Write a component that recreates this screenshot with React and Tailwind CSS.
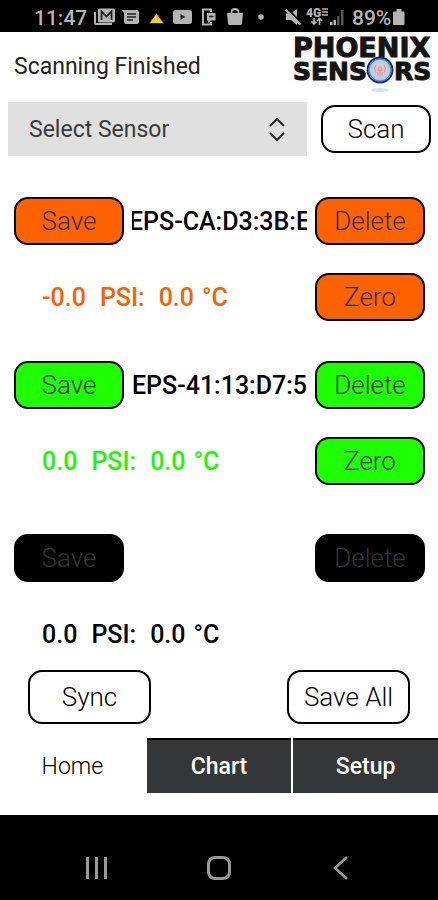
import React, { useState } from 'react';

const sensors = [
    {
        id: 'a', name: 'EPS-CA:D3:3B:E', reading: '-0.0', temp: '0.0', zero: true,
        text: 'text-[#f86000]', button: 'bg-[#ff6200] text-[#2e2e2e]', gap: 'mb-10',
    },
    {
        id: 'b', name: 'EPS-41:13:D7:5', reading: '0.0', temp: '0.0', zero: true,
        text: 'text-[#1cf800]', button: 'bg-[#1eff00] text-[#2e2e2e]', gap: 'mb-[49px]',
    },
    {
        id: 'c', name: '', reading: '0.0', temp: '0.0', zero: false,
        text: 'text-black', button: 'bg-black text-[#333333]', gap: '',
    },
];

const tabs = ['Home', 'Chart', 'Setup'];

const StatusBar = () => (
    <div className="flex h-8 shrink-0 items-center bg-black pt-1 pl-[34px] font-medium text-[#b4b4b4]">
        <span className="w-[60px] text-[21px] leading-6">11:47</span>
        <svg className="h-6 w-[250px]" viewBox="94 6 250 24" fill="#b4b4b4">
            {/* mail */}
            <path d="M94 12v11q0 2 2 2h16v-2H96V12z" />
            <rect x="98" y="8.5" width="17" height="14" rx="1.5" />
            <path d="M101.5 20v-8.500l5 5 5-5V20" fill="none" stroke="#222" strokeWidth="1.8" />
            {/* messages */}
            <path d="M122 10h15q2 0 2 2v10q0 2-2 2h-11q-2 0-2-2v-9z" />
            <path d="M127 14h9M127 17h9M127 20h6" stroke="#222" strokeWidth="1.4" />
            {/* warning */}
            <path d="M149 23.500l7.500-10.500 7.500 10.500z" fill="#f3cf1c" stroke="#141c66" strokeWidth=".8" />
            {/* video */}
            <rect x="173" y="10" width="19" height="14" rx="3" />
            <path d="M180.500 14l5 3-5 3z" fill="#111" />
            {/* phone link */}
            <path d="M211 12V9.500h-8v15h8V22" fill="none" stroke="#b4b4b4" strokeWidth="2" />
            <path d="M207 13h8.500v7.500h-5l-2.500 2.500v-2.500h-1z" />
            <path d="M209 16.500h4.500" stroke="#222" strokeWidth="1.500" />
            {/* bag */}
            <path d="M227 13h16l-1 10.500q-.2 1.500-2 1.500h-10q-1.800 0-2-1.500z" />
            <path d="M231.500 14v-1.500q0-3.500 3.500-3.500t3.500 3.500V14" fill="none" stroke="#b4b4b4" strokeWidth="1.800" />
            <circle cx="261" cy="17" r="2.800" />
            {/* muted */}
            <path d="M286 13.500h5l6-4.500v16l-6-5h-5z" />
            <path d="M286.500 8l15 15" stroke="#000" strokeWidth="2" />
            <path d="M285.500 9.500l15 15" stroke="#b4b4b4" strokeWidth="2.200" />
            {/* network */}
            <text x="306" y="17" fontSize="12" fontWeight="900">4G</text>
            <path d="M322 9h6M322 12h6M322 15h6" stroke="#b4b4b4" strokeWidth="1.300" />
            <path d="M314 18v6M311.500 21.500l2.500 2.500 2.500-2.500M319.500 25v-6M317 21l2.500-2.500L322 21" fill="none" stroke="#b4b4b4" strokeWidth="1.700" />
            <path d="M330 25v-3h2.500v3zM333.500 25v-5h2.500v5z" />
            <path d="M337 25v-9h2.500v9zM341 25V10h2.500v15z" fill="#555" />
        </svg>
        <span className="ml-2 text-[21px] leading-6">89%</span>
        <svg className="ml-0.5 h-6 w-3" viewBox="0 0 12 24" fill="#b4b4b4">
            <path d="M3.500 3h5v2.500h2q1 0 1 1V18q0 1-1 1H1q-1 0-1-1V6.500q0-1 1-1h2.500z" />
        </svg>
    </div>
);

const Logo = () => (
    <svg className="h-[60px] w-[146px]" viewBox="0 0 146 60" role="img" aria-label="Phoenix Sensors">
        <defs>
            <radialGradient id="badge">
                <stop offset="0" stopColor="#f4b6bd" />
                <stop offset=".45" stopColor="#cfd0da" />
                <stop offset=".75" stopColor="#b4ccd8" />
                <stop offset="1" stopColor="#5c9ccc" />
            </radialGradient>
        </defs>
        <g fill="#141414" stroke="#141414" strokeWidth="1" fontFamily="DejaVu Sans, sans-serif" fontWeight="700" fontSize="25">
            <text x="1" y="24" fontSize="27">PHOENIX</text>
            <text x="1" y="47">SENS</text>
            <text x="102" y="47">RS</text>
        </g>
        <circle cx="88" cy="37" r="12.500" fill="url(#badge)" stroke="#15237c" strokeWidth="1.800" />
        <circle cx="88" cy="37" r="11" fill="none" stroke="#4384c6" strokeWidth="1" />
        <g fill="none" stroke="#e88a92" strokeWidth="1">
            <circle cx="88" cy="36" r="2" />
            <path d="M84 40q-3-4 0-8M92 40q3-4 0-8M88 36v8M86 39v4M90 39v4" />
        </g>
        <ellipse cx="88" cy="57" rx="9" ry="2" fill="#c8eafa" />
    </svg>
);

const ActionButton = ({ className, children, ...rest }) => (
    <button
        type="button"
        className={`shrink-0 rounded-[14px] border-2 border-black text-center text-[26px] leading-8 font-light ${className}`}
        {...rest}
    >
        {children}
    </button>
);

const SensorRow = ({ sensor }) => (
    <section className={sensor.gap}>
        <div className="flex items-center justify-between">
            <ActionButton className={`h-12 w-[110px] ${sensor.button}`}>Save</ActionButton>
            <div className="mx-2 flex min-w-0 flex-1 justify-center overflow-hidden pt-0.5 text-[25px] leading-8 font-medium whitespace-nowrap text-black">
                {sensor.name}
            </div>
            <ActionButton className={`h-12 w-[110px] ${sensor.button}`}>Delete</ActionButton>
        </div>
        <div className="mt-7 flex h-12 items-center justify-between pl-7">
            <p className={`flex gap-3.5 pt-0.5 text-[25px] leading-8 font-medium ${sensor.text}`}>
                <span>{sensor.reading}</span>
                <span>PSI:</span>
                <span className="flex gap-2">
                    <span>{sensor.temp}</span>
                    <span>°C</span>
                </span>
            </p>
            {sensor.zero && (
                <ActionButton className={`h-12 w-[110px] ${sensor.button}`}>Zero</ActionButton>
            )}
        </div>
    </section>
);

const App = () => {
    const [tab, setTab] = useState('Home');

    return (
        <div className="flex h-screen flex-col bg-white font-['Roboto',sans-serif]">
            <StatusBar />

            <header className="flex h-[62px] shrink-0 items-center justify-between pl-[14px]">
                <h1 className="pt-2 text-[23px] leading-8 font-normal text-[#222222]">Scanning Finished</h1>
                <Logo />
            </header>

            <div className="flex shrink-0 items-center gap-[14px] pt-2 pr-[7px] pb-[41px] pl-2">
                <div className="relative flex-1">
                    <select
                        aria-label="Select Sensor"
                        className="h-[54px] w-full appearance-none bg-[#e0e0e0] pt-0.5 pl-[21px] text-[23px] text-[#3a3a3a] outline-none"
                    >
                        <option>Select Sensor</option>
                    </select>
                    <svg className="pointer-events-none absolute top-4 right-[22px] h-6 w-4" viewBox="0 0 16 24" fill="none" stroke="#222" strokeWidth="2">
                        <path d="M1 8l7-7 7 7M1 15l7 7 7-7" />
                    </svg>
                </div>
                <ActionButton className="h-12 w-[110px] bg-white text-black">Scan</ActionButton>
            </div>

            <main className="min-h-0 flex-1 overflow-y-auto pr-[13px] pl-[14px] [scrollbar-width:none]">
                {sensors.map((sensor) => (
                    <SensorRow key={sensor.id} sensor={sensor} />
                ))}
            </main>

            <div className="flex shrink-0 justify-between px-7 pt-[27px] pb-[14px]">
                <ActionButton className="h-[54px] w-[123px] bg-white text-black">Sync</ActionButton>
                <ActionButton className="h-[54px] w-[123px] bg-white text-black">Save All</ActionButton>
            </div>

            <nav className="mb-[22px] grid h-[55px] shrink-0 grid-cols-3 gap-[2px]">
                {tabs.map((name) => (
                    <button
                        key={name}
                        type="button"
                        onClick={() => setTab(name)}
                        className={
                            tab === name
                                ? 'border-t-2 border-white bg-white pt-0.5 text-[23px] font-light text-black'
                                : 'border-t-2 border-black bg-[#353637] pt-0.5 text-[23px] font-medium text-white'
                        }
                    >
                        {name}
                    </button>
                ))}
            </nav>

            <footer className="flex h-[85px] shrink-0 items-center justify-center gap-[98px] bg-black pt-5">
                <button type="button" aria-label="Recent apps">
                    <svg className="h-6 w-6" viewBox="0 0 24 24" stroke="#999" strokeWidth="3">
                        <path d="M2.500 1v22M11.500 1v22M20.500 1v22" />
                    </svg>
                </button>
                <button type="button" aria-label="Home screen">
                    <svg className="h-6 w-6" viewBox="0 0 24 24" fill="none" stroke="#999" strokeWidth="3">
                        <rect x="1.500" y="1.500" width="21" height="21" rx="6.500" />
                    </svg>
                </button>
                <button type="button" aria-label="Back">
                    <svg className="h-6 w-6" viewBox="0 0 24 24" fill="none" stroke="#999" strokeWidth="2.500">
                        <path d="M18 1L6 12l12 11" />
                    </svg>
                </button>
            </footer>
        </div>
    );
};

export default App;
